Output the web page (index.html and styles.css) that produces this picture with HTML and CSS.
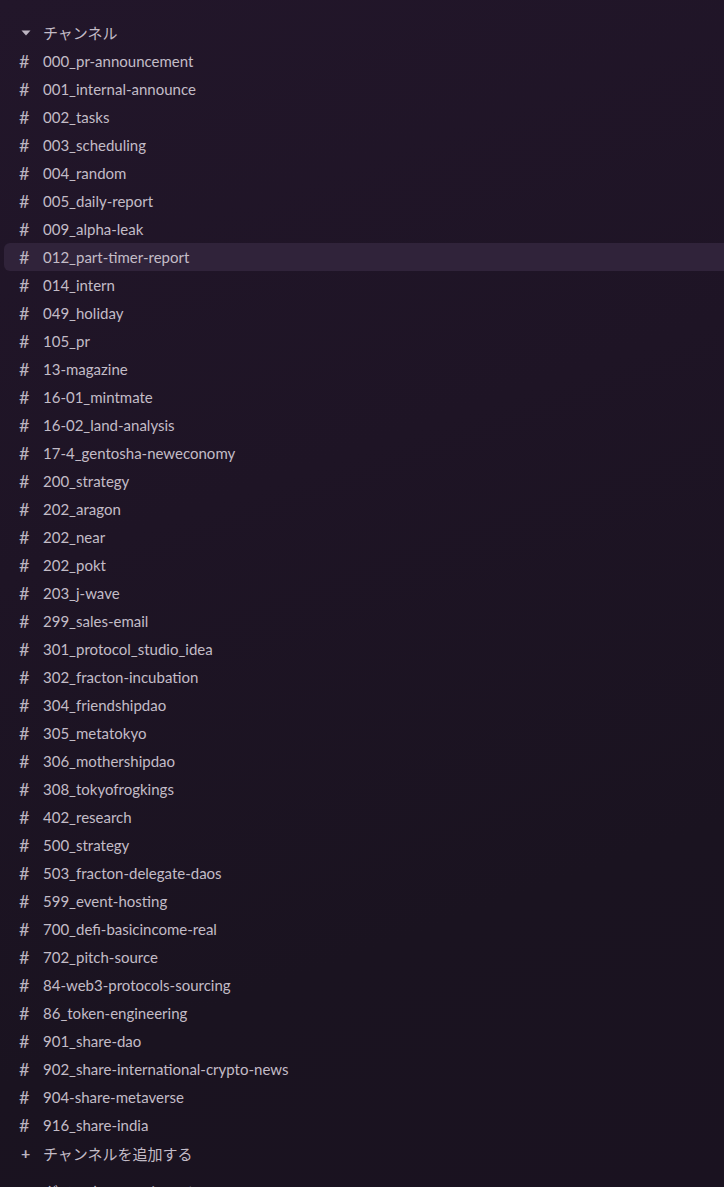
FILE: index.html
```html
<!DOCTYPE html>
<html lang="ja">
<head>
<meta charset="utf-8">
<link rel="stylesheet" href="styles.css">
</head>
<body>
<nav class="sidebar">
  <div class="section-head">
    <span class="caret"><svg width="10" height="6" viewBox="0 0 10 6"><path d="M0.5 0.5h9L5 5.5z" fill="currentColor"/></svg></span>
    <span class="label">チャンネル</span>
  </div>
  <ul class="channels">
    <li class="ch"><span class="hash">#</span><span class="name">000_pr-announcement</span></li>
    <li class="ch"><span class="hash">#</span><span class="name">001_internal-announce</span></li>
    <li class="ch"><span class="hash">#</span><span class="name">002_tasks</span></li>
    <li class="ch"><span class="hash">#</span><span class="name">003_scheduling</span></li>
    <li class="ch"><span class="hash">#</span><span class="name">004_random</span></li>
    <li class="ch"><span class="hash">#</span><span class="name">005_daily-report</span></li>
    <li class="ch"><span class="hash">#</span><span class="name">009_alpha-leak</span></li>
    <li class="ch active"><span class="hash">#</span><span class="name">012_part-timer-report</span></li>
    <li class="ch"><span class="hash">#</span><span class="name">014_intern</span></li>
    <li class="ch"><span class="hash">#</span><span class="name">049_holiday</span></li>
    <li class="ch"><span class="hash">#</span><span class="name">105_pr</span></li>
    <li class="ch"><span class="hash">#</span><span class="name">13-magazine</span></li>
    <li class="ch"><span class="hash">#</span><span class="name">16-01_mintmate</span></li>
    <li class="ch"><span class="hash">#</span><span class="name">16-02_land-analysis</span></li>
    <li class="ch"><span class="hash">#</span><span class="name">17-4_gentosha-neweconomy</span></li>
    <li class="ch"><span class="hash">#</span><span class="name">200_strategy</span></li>
    <li class="ch"><span class="hash">#</span><span class="name">202_aragon</span></li>
    <li class="ch"><span class="hash">#</span><span class="name">202_near</span></li>
    <li class="ch"><span class="hash">#</span><span class="name">202_pokt</span></li>
    <li class="ch"><span class="hash">#</span><span class="name">203_j-wave</span></li>
    <li class="ch"><span class="hash">#</span><span class="name">299_sales-email</span></li>
    <li class="ch"><span class="hash">#</span><span class="name">301_protocol_studio_idea</span></li>
    <li class="ch"><span class="hash">#</span><span class="name">302_fracton-incubation</span></li>
    <li class="ch"><span class="hash">#</span><span class="name">304_friendshipdao</span></li>
    <li class="ch"><span class="hash">#</span><span class="name">305_metatokyo</span></li>
    <li class="ch"><span class="hash">#</span><span class="name">306_mothershipdao</span></li>
    <li class="ch"><span class="hash">#</span><span class="name">308_tokyofrogkings</span></li>
    <li class="ch"><span class="hash">#</span><span class="name">402_research</span></li>
    <li class="ch"><span class="hash">#</span><span class="name">500_strategy</span></li>
    <li class="ch"><span class="hash">#</span><span class="name">503_fracton-delegate-daos</span></li>
    <li class="ch"><span class="hash">#</span><span class="name">599_event-hosting</span></li>
    <li class="ch"><span class="hash">#</span><span class="name">700_defi-basicincome-real</span></li>
    <li class="ch"><span class="hash">#</span><span class="name">702_pitch-source</span></li>
    <li class="ch"><span class="hash">#</span><span class="name">84-web3-protocols-sourcing</span></li>
    <li class="ch"><span class="hash">#</span><span class="name">86_token-engineering</span></li>
    <li class="ch"><span class="hash">#</span><span class="name">901_share-dao</span></li>
    <li class="ch"><span class="hash">#</span><span class="name">902_share-international-crypto-news</span></li>
    <li class="ch"><span class="hash">#</span><span class="name">904-share-metaverse</span></li>
    <li class="ch"><span class="hash">#</span><span class="name">916_share-india</span></li>
    <li class="ch add"><span class="hash plus">+</span><span class="name">チャンネルを追加する</span></li>
  </ul>
  <div class="section-head next">
    <span class="caret"><svg width="10" height="6" viewBox="0 0 10 6"><path d="M0.5 0.5h9L5 5.5z" fill="currentColor"/></svg></span>
    <span class="label">ダイレクトメッセージ</span>
  </div>
</nav>
</body>
</html>
```

FILE: styles.css
```css
html, body {
  margin: 0;
  padding: 0;
  height: 100%;
  overflow: hidden;
}
body {
  background: linear-gradient(160deg, #22162a 0%, #1e1425 40%, #1a1320 75%, #1a1220 100%);
  font-family: Lato, "Noto Sans CJK JP", sans-serif;
  color: #c3bcc7;
  font-size: 15px;
}
.sidebar {
  padding-top: 19px;
  padding-left: 4px;
  margin-right: -20px;
}
.section-head {
  display: flex;
  align-items: center;
  height: 28px;
}
.section-head .caret {
  width: 39px;
  display: flex;
  justify-content: center;
  padding-left: 4px;
  padding-bottom: 1px;
  box-sizing: border-box;
  color: #bdb5c2;
}
.section-head .label {
  font-size: 15px;
  position: relative;
  top: -1px;
}
.section-head.next {
  margin-top: 11px;
}
.channels {
  list-style: none;
  margin: 0;
  padding: 0;
}
.ch {
  display: flex;
  align-items: center;
  height: 28px;
  border-radius: 6px 0 0 6px;
  white-space: nowrap;
}
.ch.active {
  background: #30233a;
}
.hash {
  width: 39px;
  padding-left: 15px;
  box-sizing: border-box;
  font-size: 18px;
  line-height: 1;
  color: #bcb4c0;
}
.hash.plus {
  padding-left: 17px;
  font-size: 16px;
  font-weight: 700;
}
```
